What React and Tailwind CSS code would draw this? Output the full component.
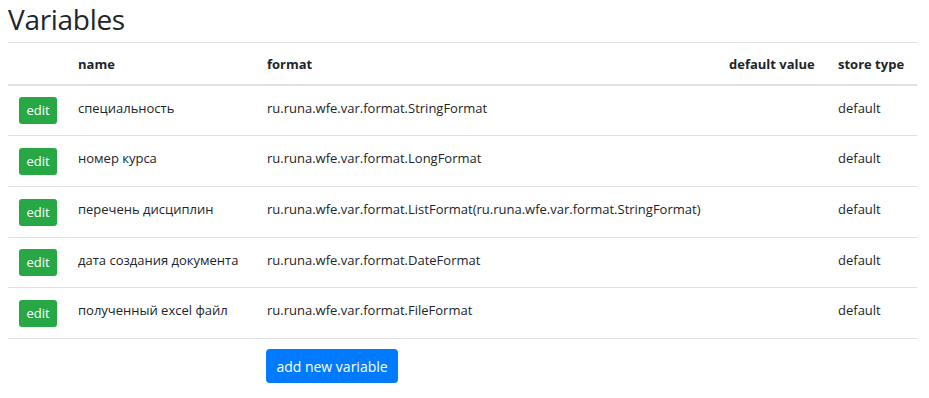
export default function App() {
  const rows = [
    ["специальность", "ru.runa.wfe.var.format.StringFormat"],
    ["номер курса", "ru.runa.wfe.var.format.LongFormat"],
    ["перечень дисциплин", "ru.runa.wfe.var.format.ListFormat(ru.runa.wfe.var.format.StringFormat)"],
    ["дата создания документа", "ru.runa.wfe.var.format.DateFormat"],
    ["полученный excel файл", "ru.runa.wfe.var.format.FileFormat"],
  ];
  return (
    <div className="bg-white min-h-screen px-2 text-[#212529]" style={{ fontFamily: '"Open Sans", "Noto Sans", sans-serif' }}>
      <h1 className="text-[28px] leading-[34px] font-medium pt-[2px] mb-[6px] tracking-[-0.3px]">Variables</h1>
      <table className="table-fixed border-collapse w-[909px] text-[13px]">
        <colgroup>
          <col className="w-[58px]" />
          <col className="w-[189px]" />
          <col className="w-[462px]" />
          <col className="w-[109px]" />
          <col className="w-[91px]" />
        </colgroup>
        <thead>
          <tr className="border-t border-b-2 border-[#dee2e6] h-[42px] font-bold">
            <th className="px-3 pt-[2px]"></th>
            <th className="px-3 pt-[2px] text-left">name</th>
            <th className="px-3 pt-[2px] text-left">format</th>
            <th className="px-3 pt-[2px] text-left whitespace-nowrap">default value</th>
            <th className="px-3 pt-[2px] text-left whitespace-nowrap">store type</th>
          </tr>
        </thead>
        <tbody>
          {rows.map(([n, f], i) => (
            <tr key={i} className={"border-b border-[#dee2e6] " + (i === 3 ? "h-[50px]" : "h-[51px]")}>
              <td className="pl-[11px] pr-0">
                <button className="bg-[#28a745] text-white rounded-[3px] w-[38px] h-[27px] text-[13px] leading-none">edit</button>
              </td>
              <td className="px-3 pb-[4px] whitespace-nowrap">{n}</td>
              <td className="px-3 pb-[4px] whitespace-nowrap">{f}</td>
              <td className="px-3 pb-[4px]"></td>
              <td className="px-3 pb-[4px]">default</td>
            </tr>
          ))}
        </tbody>
      </table>
      <div className="pl-[258px] pt-[10px]">
        <button className="bg-[#007bff] text-white rounded-[4px] w-[132px] h-[34px] text-[14px]">add new variable</button>
      </div>
    </div>
  );
}
